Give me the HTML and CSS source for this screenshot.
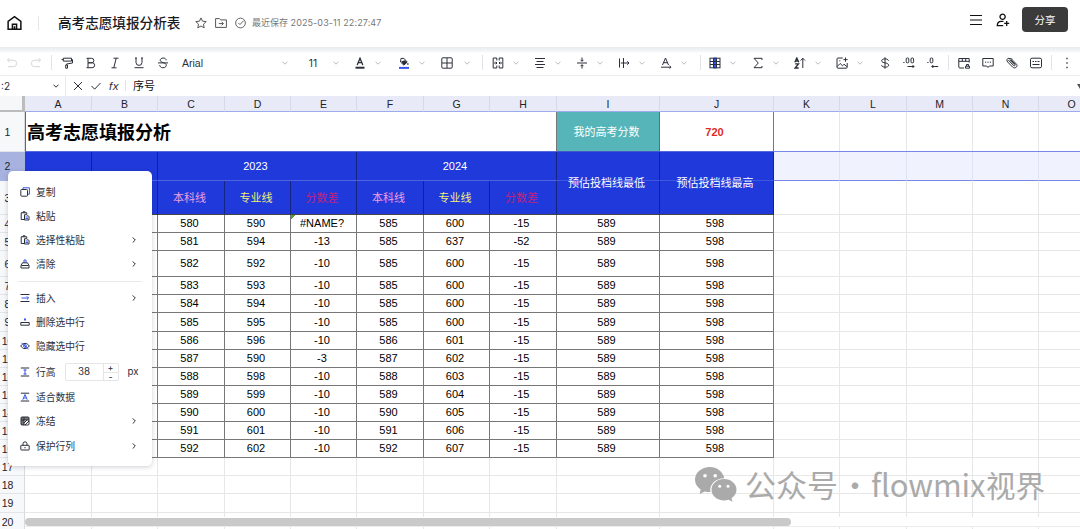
FILE: index.html
```html
<!DOCTYPE html>
<html lang="zh">
<head>
<meta charset="utf-8">
<title>高考志愿填报分析表</title>
<link rel="stylesheet" href="styles.css">
</head>
<body>
<svg class="defs" width="0" height="0">
  <symbol id="down" viewBox="0 0 6 4"><path d="M.5.7 3 3.2 5.5.7"/></symbol>
  <symbol id="right" viewBox="0 0 4 6"><path d="M.7.4 3.3 3 .7 5.6"/></symbol>
</svg>
<div class="app">
  <header class="top">
    <svg class="home" viewBox="0 0 16 16"><path d="M1.200 6.200 8 1.200l6.800 5v8.500H1.200z"/><path d="M5.800 14.500V9.300h4.400v5.200M8 11.500v3"/></svg>
    <span class="bar"></span>
    <h1 class="doc">高考志愿填报分析表</h1>
    <div class="meta">
      <svg viewBox="0 0 12 12"><path d="m6 .9 1.500 3.300 3.700.4-2.700 2.500.7 3.700L6 9l-3.200 1.800.7-3.700L.8 4.600l3.700-.4z"/></svg>
      <svg viewBox="0 0 12 12"><path d="M.6 10.400V1.600h3.800l1.200 1.300h5.800v7.500zM3.800 6.600h4.400M6.600 4.800l1.800 1.800-1.800 1.800"/></svg>
      <svg viewBox="0 0 12 12"><circle cx="6" cy="6" r="5.300"/><path d="m3.700 6 1.700 1.700 4-4.200"/></svg>
    </div>
    <span class="saved">最近保存 <span class="stamp">2025-03-11 22:27:47</span></span>
    <div class="actions">
      <svg class="lines" viewBox="0 0 12 12"><path d="M0 1.500h12M0 6h12M0 10.500h12"/></svg>
      <svg class="person" viewBox="0 0 14 14"><circle cx="6.600" cy="3.800" r="2.600"/><path d="M7.400 8.300H5.200C2.800 8.300 1.300 9.900 1.300 12.600h5.900M8.200 10.400h5M10.700 7.900v5"/></svg>
      <button class="share">分享</button>
    </div>
  </header>

  <div class="tools">
    <span class="ic off"><svg viewBox="0 0 12 12"><path d="M3.600 1 1.400 3.200l2.200 2.200M1.400 3.200h6a3.200 3.200 0 0 1 0 6.500H2"/></svg></span>
    <span class="ic off"><svg viewBox="0 0 12 12"><path d="m8.400 1 2.200 2.200-2.200 2.200M10.600 3.200h-6a3.200 3.200 0 0 0 0 6.500H10"/></svg></span>
    <span class="sep"></span>
    <span class="ic"><svg viewBox="0 0 12 12"><path d="M2.300 1.200h8.200v2.900H2.300zM2.300 2.600H.6M10.500 2.600h1v3.400L5.600 7v1M4.700 8h1.800v3.200H4.700z"/></svg></span>
    <span class="ic"><svg viewBox="0 0 12 12"><path d="M3 1.300h3.600a2.200 2.200 0 0 1 0 4.500H3zM3 5.800h4.200a2.400 2.400 0 0 1 0 4.900H3zM1.500 1.300H3M1.500 10.700H3"/></svg></span>
    <span class="ic"><svg viewBox="0 0 12 12"><path d="M4.500 1.200h5M2.500 10.800h5M7.200 1.200 4.800 10.800"/></svg></span>
    <span class="ic"><svg viewBox="0 0 12 12"><path d="M3 1v4.400a3 3 0 0 0 6 0V1M1.500 10.700h9M2 1h2M8 1h2"/></svg></span>
    <span class="ic"><svg viewBox="0 0 12 12"><path d="M9.300 3.300C9 .2 3.200.3 3.200 3.400 3.200 5.700 9.300 5.400 9.300 8.300c0 3.200-6.400 3.400-6.600-.2M1 5.900h10"/></svg></span>
    <span class="font">Arial</span><span class="arrow"><svg><use href="#down"/></svg></span>
    <span class="size">11</span><span class="arrow"><svg><use href="#down"/></svg></span>
    <span class="ic drop first"><svg viewBox="0 0 12 12"><path class="mid" d="M3.200 8 6 1.200 8.800 8M4 5.700h4"/><path class="thick" d="M1.500 10.700h9"/></svg><svg class="chev"><use href="#down"/></svg></span>
    <span class="ic drop"><svg viewBox="0 0 12 12"><path class="solid" d="M3.200 4.600 6.500 3.300l2.600 2-3.200 3z"/><path d="M3 1.400h3l3.200 3.700-3.300 3L2.500 5zM9.900 6v2"/><path class="thick blue" d="M1 10.900h10"/></svg><svg class="chev"><use href="#down"/></svg></span>
    <span class="ic drop"><svg viewBox="0 0 12 12"><rect x=".8" y=".8" width="10.400" height="10.400" rx="1"/><path d="M6 1v10M1 6h10"/></svg><svg class="chev"><use href="#down"/></svg></span>
    <span class="sep"></span>
    <span class="ic drop"><svg viewBox="0 0 12 12"><path d="M4.800 1H1.200v10h3.600V8.500M4.800 1v2.500M7.200 1h3.600v10H7.200V8.500M7.200 1v2.500M2 6h3M10 6H7M3.800 4.800 5 6 3.800 7.200M8.200 4.800 7 6l1.200 1.200"/></svg><svg class="chev"><use href="#down"/></svg></span>
    <span class="ic drop"><svg viewBox="0 0 12 12"><path d="M1 1.500h10M2.500 4.500h7M1 7.500h10M2.500 10.500h7"/></svg><svg class="chev"><use href="#down"/></svg></span>
    <span class="ic drop"><svg viewBox="0 0 12 12"><path d="M1 6h10M6 .5v3.700M6 11.500V7.800M4.500 2.800 6 4.300l1.500-1.500M4.500 9.200 6 7.700l1.500 1.500"/></svg><svg class="chev"><use href="#down"/></svg></span>
    <span class="ic drop"><svg viewBox="0 0 12 12"><path d="M1.500 1.500v9M5.500 1v10M2.800 6h8.200M9.300 4.300 11 6 9.300 7.700"/></svg><svg class="chev"><use href="#down"/></svg></span>
    <span class="ic drop"><svg viewBox="0 0 12 12"><path d="M2.500 8 5.500 1l3 7M3.600 5.700h3.900M1 10.200h10M9.600 8.800l1.400 1.400-1.400 1.400"/></svg><svg class="chev"><use href="#down"/></svg></span>
    <span class="sep late"></span>
    <span class="ic drop"><svg viewBox="0 0 12 12"><path class="blue fill" d="M4.500 1h3v10h-3z"/><rect x="1" y="1.200" width="10" height="9.600"/><path d="M1 4.500h10M1 7.500h10M4.500 1.500v9M7.500 1.500v9"/></svg><svg class="chev"><use href="#down"/></svg></span>
    <span class="ic drop shift"><svg viewBox="0 0 12 12"><path d="M10 3V1.300H2L6.300 6 2 10.700h8V9"/></svg><svg class="chev"><use href="#down"/></svg></span>
    <span class="ic drop"><svg viewBox="0 0 12 12"><path class="mid" d="m.8 5.200 2-4.200 2 4.200M1.500 4h2.600M1.100 6.900h3.400L1.100 11h3.600"/><path d="M8.800 11V1.300M6.600 3.500l2.200-2.200L11 3.500"/></svg><svg class="chev"><use href="#down"/></svg></span>
    <span class="ic drop"><svg viewBox="0 0 12 12"><path d="M6.700 1H2a1 1 0 0 0-1 1v8.200a1 1 0 0 0 1 1h8.200a1 1 0 0 0 1-1V6M1.200 9.500l3-3 2.300 2.300L8 7.200l2.800 2.400M9.500.5v4.200M7.400 2.600h4.200M3.300 3.800h1"/></svg><svg class="chev"><use href="#down"/></svg></span>
    <span class="ic cash"><svg viewBox="0 0 12 12"><path d="M9.500 3.700C9 1.300 2.700 1.200 2.700 3.800 2.700 6.500 9.600 5.300 9.600 8.200c0 2.700-6.600 2.600-7.100 0M6 .3v11.400"/></svg></span>
    <span class="ic"><svg viewBox="0 0 12 12"><path d="M.3 5.500h1.200"/><rect x="3.200" y="1" width="2.600" height="4.800" rx="1"/><rect x="8" y="1" width="2.600" height="4.800" rx="1"/><path d="M4.500 9.500H11M9.500 8l1.500 1.500L9.500 11"/></svg></span>
    <span class="ic"><svg viewBox="0 0 12 12"><path d="M.3 5.500h1.200"/><rect x="3.200" y="1" width="2.600" height="4.800" rx="1"/><path d="M4.800 9.500h6.400M6.300 8 4.800 9.500 6.300 11"/></svg></span>
    <span class="sep"></span>
    <span class="ic"><svg viewBox="0 0 12 12"><path d="M6 11H1.800a1 1 0 0 1-1-1V1.500h10.400V5.500M.8 4.300h10.400M4.300 1v3.300M7.700 1v3.300M7.500 11.200h4V9.200h-4zM8.500 9.200V7.500h2v1.700"/></svg></span>
    <span class="ic"><svg viewBox="0 0 12 12"><path d="M.8 1.500h10.400v7.500H7.300L6 10.500 4.700 9H.8zM3 5.200h1.200M5.400 5.200h1.200M7.800 5.200H9"/></svg></span>
    <span class="ic"><svg viewBox="0 0 12 12"><path d="M6.500 2.200 2.900 1.300C.8 1.300.3 3.800 1.700 5l5 5.200c2.200 1.800 5.300-.3 4-2.800L5.700 2.300M2.400 3.200l5.200 5.300c1.100.8 2.200-.3 1.400-1.400L4.500 2.600M3.500 2.700 8.300 7.600"/></svg></span>
    <span class="ic"><svg viewBox="0 0 12 12"><rect x=".5" y="1.200" width="11" height="9.600" rx="1.500"/><path d="M2.500 4.500H4M5 4.500h1.500M7.500 4.500h2M2.500 7.500h7"/></svg></span>
    <span class="sep"></span>
    <span class="ic"><svg viewBox="0 0 12 12"><path class="mid" d="M6 .8v1.500M6 5.200v1.500M6 9.700v1.500"/></svg></span>
  </div>

  <div class="formula">
    <span class="ref">:2</span><svg class="refdown"><use href="#down"/></svg>
    <span class="ops">
      <svg viewBox="0 0 10 10"><path d="m1 1 8 8M9 1 1 9"/></svg>
      <svg viewBox="0 0 10 10"><path d="m.6 5 3 3.200L9.500 2"/></svg>
      <i class="fx">fx</i>
    </span>
    <span class="val">序号</span>
    <svg class="more" viewBox="0 0 6 5"><path d="M0 0h6L3 5z"/></svg>
  </div>

  <main class="sheet">
    <div class="grid">
      <div class="corner"></div>
      <div class="ch">A</div><div class="ch">B</div><div class="ch">C</div><div class="ch">D</div><div class="ch">E</div><div class="ch">F</div><div class="ch">G</div><div class="ch">H</div><div class="ch">I</div><div class="ch">J</div><div class="ch">K</div><div class="ch">L</div><div class="ch">M</div><div class="ch">N</div><div class="ch">O</div>

      <div class="rh">1</div><div class="c title">高考志愿填报分析</div><div class="c teal">我的高考分数</div><div class="c score">720</div><p></p><p></p><p></p><p></p><p></p>

      <div class="rh on">2</div><div class="c h sel"></div><div class="c h sel"></div><div class="c h sel w3">2023</div><div class="c h sel w3">2024</div><div class="c h tall"><span>预估投档线最低</span></div><div class="c h tall"><span>预估投档线最高</span></div><p class="sel"></p><p class="sel"></p><p class="sel"></p><p class="sel"></p><p class="sel"></p>

      <div class="rh">3</div><div class="c h"></div><div class="c h"></div><div class="c h pink">本科线</div><div class="c h yellow">专业线</div><div class="c h red">分数差</div><div class="c h pink">本科线</div><div class="c h yellow">专业线</div><div class="c h red">分数差</div><p></p><p></p><p></p><p></p><p></p>

      <div class="rh">4</div><div class="c"></div><div class="c"></div><div class="c">580</div><div class="c">590</div><div class="c err">#NAME?</div><div class="c">585</div><div class="c">600</div><div class="c">-15</div><div class="c">589</div><div class="c">598</div><p></p><p></p><p></p><p></p><p></p>
      <div class="rh">5</div><div class="c"></div><div class="c"></div><div class="c">581</div><div class="c">594</div><div class="c">-13</div><div class="c">585</div><div class="c">637</div><div class="c">-52</div><div class="c">589</div><div class="c">598</div><p></p><p></p><p></p><p></p><p></p>
      <div class="rh">6</div><div class="c"></div><div class="c"></div><div class="c">582</div><div class="c">592</div><div class="c">-10</div><div class="c">585</div><div class="c">600</div><div class="c">-15</div><div class="c">589</div><div class="c">598</div><p></p><p></p><p></p><p></p><p></p>
      <div class="rh">7</div><div class="c"></div><div class="c"></div><div class="c">583</div><div class="c">593</div><div class="c">-10</div><div class="c">585</div><div class="c">600</div><div class="c">-15</div><div class="c">589</div><div class="c">598</div><p></p><p></p><p></p><p></p><p></p>
      <div class="rh">8</div><div class="c"></div><div class="c"></div><div class="c">584</div><div class="c">594</div><div class="c">-10</div><div class="c">585</div><div class="c">600</div><div class="c">-15</div><div class="c">589</div><div class="c">598</div><p></p><p></p><p></p><p></p><p></p>
      <div class="rh">9</div><div class="c"></div><div class="c"></div><div class="c">585</div><div class="c">595</div><div class="c">-10</div><div class="c">585</div><div class="c">600</div><div class="c">-15</div><div class="c">589</div><div class="c">598</div><p></p><p></p><p></p><p></p><p></p>
      <div class="rh">10</div><div class="c"></div><div class="c"></div><div class="c">586</div><div class="c">596</div><div class="c">-10</div><div class="c">586</div><div class="c">601</div><div class="c">-15</div><div class="c">589</div><div class="c">598</div><p></p><p></p><p></p><p></p><p></p>
      <div class="rh">11</div><div class="c"></div><div class="c"></div><div class="c">587</div><div class="c">590</div><div class="c">-3</div><div class="c">587</div><div class="c">602</div><div class="c">-15</div><div class="c">589</div><div class="c">598</div><p></p><p></p><p></p><p></p><p></p>
      <div class="rh">12</div><div class="c"></div><div class="c"></div><div class="c">588</div><div class="c">598</div><div class="c">-10</div><div class="c">588</div><div class="c">603</div><div class="c">-15</div><div class="c">589</div><div class="c">598</div><p></p><p></p><p></p><p></p><p></p>
      <div class="rh">13</div><div class="c"></div><div class="c"></div><div class="c">589</div><div class="c">599</div><div class="c">-10</div><div class="c">589</div><div class="c">604</div><div class="c">-15</div><div class="c">589</div><div class="c">598</div><p></p><p></p><p></p><p></p><p></p>
      <div class="rh">14</div><div class="c"></div><div class="c"></div><div class="c">590</div><div class="c">600</div><div class="c">-10</div><div class="c">590</div><div class="c">605</div><div class="c">-15</div><div class="c">589</div><div class="c">598</div><p></p><p></p><p></p><p></p><p></p>
      <div class="rh">15</div><div class="c"></div><div class="c"></div><div class="c">591</div><div class="c">601</div><div class="c">-10</div><div class="c">591</div><div class="c">606</div><div class="c">-15</div><div class="c">589</div><div class="c">598</div><p></p><p></p><p></p><p></p><p></p>
      <div class="rh">16</div><div class="c"></div><div class="c"></div><div class="c">592</div><div class="c">602</div><div class="c">-10</div><div class="c">592</div><div class="c">607</div><div class="c">-15</div><div class="c">589</div><div class="c">598</div><p></p><p></p><p></p><p></p><p></p>
      <div class="rh">17</div><p></p><p></p><p></p><p></p><p></p><p></p><p></p><p></p><p></p><p></p><p></p><p></p><p></p><p></p><p></p>
      <div class="rh">18</div><p></p><p></p><p></p><p></p><p></p><p></p><p></p><p></p><p></p><p></p><p></p><p></p><p></p><p></p><p></p>
      <div class="rh">19</div><p></p><p></p><p></p><p></p><p></p><p></p><p></p><p></p><p></p><p></p><p></p><p></p><p></p><p></p><p></p>
      <div class="rh">20</div><p></p><p></p><p></p><p></p><p></p><p></p><p></p><p></p><p></p><p></p><p></p><p></p><p></p><p></p><p></p>
    </div>
    <div class="selline"></div>
    <div class="track"><div class="thumb"></div></div>
  </main>

  <nav class="menu">
    <div class="mi"><svg viewBox="0 0 10 10"><path class="blue" d="M3 2.300V.8h6.400v6.400H7.700"/><rect x=".8" y="2.500" width="6.700" height="6.700" rx=".8"/></svg>复制</div>
    <div class="mi"><svg viewBox="0 0 10 10"><path d="M4 8.500H1.200V1.800h5.600V3M3 1.800V.8h2v1"/><path d="M4.500 3.700H7l2 2V9H4.500z"/><path class="blue" d="M5.500 6h2.500M5.500 7.600H8"/></svg>粘贴</div>
    <div class="mi"><svg viewBox="0 0 10 10"><path d="M4 8.500H1.200V1.800h5.600V3M3 1.800V.8h2v1"/><path d="M4.500 3.700H7l2 2V9H4.500z"/><path class="blue" d="M5.500 6h2.500M5.500 7.600H8"/></svg>选择性粘贴<svg class="go"><use href="#right"/></svg></div>
    <div class="mi"><svg viewBox="0 0 10 10"><path class="blue" d="M4 3.800V1h2v2.800"/><path d="M1 9V6.500l1.500-2.700h5L9 6.500V9zM1.300 6.500h7.400"/></svg>清除<svg class="go"><use href="#right"/></svg></div>
    <hr>
    <div class="mi"><svg viewBox="0 0 10 10"><path d="M.5 1.500h9M.5 8.500h9"/><path class="blue" d="M1.500 5h7M6.800 3.300 8.500 5 6.800 6.700"/></svg>插入<svg class="go"><use href="#right"/></svg></div>
    <div class="mi"><svg viewBox="0 0 10 10"><path d="M.8 5.500h8.400v2.700H.8z"/><path class="blue dot" d="M4 2.500h2"/></svg>删除选中行</div>
    <div class="mi"><svg viewBox="0 0 10 10"><path d="M.7 5C3 1.500 7 1.500 9.300 5 7 8.500 3 8.500.7 5z"/><circle class="blue" cx="5" cy="5" r="1.400"/><path class="blue" d="m1.500 2 7 6"/></svg>隐藏选中行</div>
    <div class="mi high"><svg viewBox="0 0 10 10"><path d="M.8 1h8.400M.8 9h8.400"/><path class="blue" d="M5 2.500v5M3.500 3h3M3.500 7h3"/></svg>行高
      <span class="num"><span class="n">38</span><span class="steps"><b>+</b><b>-</b></span></span><span class="px">px</span></div>
    <div class="mi"><svg viewBox="0 0 10 10"><path d="M.8 1.200h8.400M.8 9h8.400"/><path class="blue" d="M2.800 7.700 5 2.500l2.200 5.200M3.500 6h3"/></svg>适合数据</div>
    <div class="mi"><svg viewBox="0 0 10 10"><path class="shade" d="M1 1h8v3H4v5H1z"/><rect x="1" y="1" width="8" height="8" rx="1"/><path d="M1 4h8M4 1v8M4 7l3-3M5 9l4-4"/></svg>冻结<svg class="go"><use href="#right"/></svg></div>
    <div class="mi"><svg viewBox="0 0 10 10"><rect x=".8" y="4.300" width="8.400" height="4.700" rx=".5"/><path d="M3 4.300V2.800a2 2 0 0 1 4 0v1.500M5 6v1.300"/></svg>保护行列<svg class="go"><use href="#right"/></svg></div>
  </nav>

  <div class="mark">
    <svg viewBox="0 0 42 35"><path d="M15 0C6.500 0 0 5.600 0 12.800c0 4.200 2.200 7.400 5.700 9.800L4.500 27l5.300-2.600c2 .5 3.600.8 5.600.7C14 18 20 11.300 29.300 11.200 28 4.700 22 0 15 0z"/><path d="M29 12c-7 0-12.500 4.800-12.500 10.800S22 33.500 29 33.500c1.600 0 3-.3 4.500-.8l4.200 2.100-1.200-3.500c3-2 5-5 5-8.500C41.500 16.800 36 12 29 12z"/><g class="eyes"><circle cx="10" cy="8.800" r="1.800"/><circle cx="20.200" cy="8.800" r="1.800"/><circle cx="24.700" cy="19.300" r="1.500"/><circle cx="33" cy="19.300" r="1.500"/></g></svg>
    <span class="m1">公众号</span><span class="m2">·</span><span class="m3">flowmix</span><span class="m4">视界</span>
  </div>
</div>
</body>
</html>
```
FILE: styles.css
```css
* { box-sizing: border-box; }
body { margin: 0; background: #fff; color: #1f2329; font-family: "Liberation Sans", "Noto Sans CJK SC", sans-serif; }
svg { fill: none; stroke: currentColor; stroke-width: 1; flex: none; display: block; }
.defs { position: absolute; }
.app { position: relative; width: 1080px; height: 529px; overflow: hidden; display: flex; flex-direction: column; }
.blue { stroke: #3656f0; }
.fill { fill: #3656f0; }

.top { height: 47px; flex: none; display: flex; align-items: center; padding: 0 12px 2px 7px; }
.home { width: 15px; height: 16px; stroke-width: 1.600; color: #111; }
.bar { width: 1px; height: 14px; background: #e6e6e6; margin: 0 19px 0 16px; }
.doc { margin: 0; width: 137px; font-size: 13.600px; font-weight: 500; line-height: 20px; color: #1b1b1f; white-space: nowrap; font-family: "Noto Sans CJK SC", sans-serif; padding-bottom: 1px; }
.meta { display: flex; gap: 8px; color: #555; }
.meta svg { width: 12px; height: 12px; }
.meta svg:nth-child(3) { width: 11px; }
.saved { margin-left: 6px; font: 9px/14px Inter, "Noto Sans CJK SC", sans-serif; color: #777; white-space: nowrap; }
.stamp { font-size: 9px; letter-spacing: .110px; }
.actions { margin-left: auto; display: flex; align-items: center; padding-bottom: 6px; color: #111; }
.lines { width: 12px; height: 12px; stroke-width: 1.200; }
.person { width: 14px; height: 14px; margin: 0 12px 0 14px; stroke-width: 1.300; }
.share { width: 46px; height: 25px; border: 0; border-radius: 4px; background: #3b3b3b; color: #fff; font: 10.500px/24px "Noto Sans CJK SC", sans-serif; padding: 0; }

.tools { height: 29px; flex: none; display: flex; align-items: center; padding-top: 3px; border-bottom: 1px solid #ededef; background: linear-gradient(#e8eaec 0, #f1f2f4 3px, #f8f9fa 5px, #fff 6px); color: #2b2f3a; }
.ic { width: 24px; display: flex; align-items: center; justify-content: center; flex: none; }
.ic > svg { width: 12px; height: 12px; }
.off { color: #d5d6d9; }
.sep { width: 1px; height: 15px; background: #e2e3e6; margin: 0 3px; flex: none; }
.late { margin: 0 2px 0 4px; }
.font { font: 10.500px/14px "Liberation Sans", sans-serif; width: 94px; margin-left: 7px; }
.size { font: 10.200px/14px Inter, sans-serif; width: 26px; margin-left: 6px; margin-right: 1px; text-align: center; }
.arrow { width: 18px; display: flex; justify-content: center; color: #b9bbc0; }
.arrow svg, .ic > svg.chev { width: 6px; height: 4px; color: #b9bbc0; }
.drop { width: 36px; padding-left: 6px; justify-content: flex-start; margin-right: 6px; }
.drop .chev { margin-left: 9px; }
.first { margin-left: 3px; }
.first, .first + .drop { width: 37px; margin-right: 7px; }
.first + .drop { margin-right: 6px; }
.first + .drop + .drop { width: 37px; margin-right: 7px; }
.first + .drop + .drop .chev { margin-left: 11px; }
.shift { margin-left: 1px; }
.cash { margin-left: 1px; }
.mid { stroke-width: 1.300; }
.thick { stroke-width: 2; }
.dot { stroke-width: 2; }
.solid { fill: currentColor; stroke: none; }

.formula { height: 20px; flex: none; display: flex; align-items: center; font-size: 11px; color: #2b2f3a; }
.ref { width: 53px; font: 10px/14px Inter, sans-serif; padding-left: 1px; }
.refdown { width: 6px; height: 4px; }
.ops { display: flex; align-items: center; gap: 8px; height: 20px; margin-left: 6px; padding-left: 7px; border-left: 1px solid #e9e9ec; }
.ops svg { width: 10px; height: 10px; }
.fx { font: italic 11.500px/14px "Liberation Sans", sans-serif; width: 11px; letter-spacing: .500px; }
.val { margin-left: 5px; padding-left: 7px; border-left: 1px solid #e3e3e6; line-height: 11px; font-family: "Noto Sans CJK SC", sans-serif; margin-bottom: 1px; color: #111; }
.more { width: 6px; height: 5px; margin: 0 -3px 0 auto; fill: #555; stroke: none; }

.sheet { position: relative; height: 433px; overflow: hidden; }
.grid { display: grid; width: 1105px; grid-template-columns: 25px 67px 66px 67px 66px 66px 67px 66px 67px 103px 114px 66px 67px 66px 66px 66px; grid-template-rows: 16px 40px 29px 34px 18px 18px 26px 18px 18px 19px 18px 18px 18px 18px 18px 18px 18px 18px 18px 19px 18px; font-size: 11px; }
.corner { background: #f6f7f9; border: solid #bcbcbc; border-width: 0 3px 2px 0; }
.ch { background: #e8eaf7; border-right: 1px solid #d6d9e8; border-bottom: 1px solid #9dabed; text-align: center; font: 10.500px/17px "Liberation Sans", sans-serif; }
.rh { background: #f7f8fa; border-right: 1px solid #d8dade; border-bottom: 1px solid #e2e4e8; display: flex; align-items: center; padding-right: 9px; justify-content: center; font: 10.500px/12px "Liberation Sans", sans-serif; color: #1f2329; }
.on { background: #a7b2e1; border-color: #a7b2e1; }
.grid p { margin: 0; border-right: 1px solid #e7e7e7; border-bottom: 1px solid #e7e7e7; }
.c { display: flex; align-items: center; justify-content: center; border-right: 1px solid #777; border-bottom: 1px solid #777; color: #000; padding: 0 3px 1px 0; line-height: 12px; white-space: nowrap; }
.title { grid-column: span 8; justify-content: flex-start; padding: 0 0 1px 1px; font: bold 18px/24px "Noto Sans CJK SC", sans-serif; border-left: 1px solid #666; border-bottom-color: #5469dd; }
.teal { background: #55b5b8; color: #fff; border-color: #36807f #36807f #4458ce; padding-bottom: 0; }
.score { color: #e02b22; font-weight: bold; border-bottom-color: #5469dd; padding: 0 4px 0 0; }
.h { background: #1f39db; color: #fff; border-color: #142482; border-bottom-color: #444; }
.sel.h { border-bottom-color: #4058e0; padding-bottom: 0; }
.grid p.sel { background: #f0f3fd; border-color: #dfe4f5; border-bottom-color: #7689e8; box-shadow: 0 -1px #7689e8; }
.w3 { grid-column: span 3; }
.tall { grid-row: span 2; padding: 0 3px 0 0; }
.pink { color: #ef9fe0; }
.yellow { color: #f3ef77; }
.red { color: #c4227a; }
.pink, .yellow, .red { padding-bottom: 0; }
.err { background: linear-gradient(135deg, #48a52a 3px, transparent 3.100px); }
.selline { position: absolute; left: 25px; top: 84px; width: 749px; height: 1px; background: rgba(90, 112, 230, .55); }
.track { position: absolute; left: 25px; right: 0; bottom: 2px; height: 10px; padding-top: 1px; background: #fff; border-bottom: 1px solid #ececec; }
.thumb { width: 766px; height: 8px; border-radius: 4px; background: #c9c9c9; }

.menu { position: absolute; left: 8px; top: 171px; width: 144px; height: 295px; padding: 8.800px 10px 0; background: #fff; border-radius: 5px; box-shadow: 0 1px 5px rgba(30, 35, 60, .22); color: #2b2f3a; }
.mi { height: 24.200px; display: flex; align-items: center; font: 9.750px/14px "Noto Sans CJK SC", sans-serif; padding: 0 6px 0 2px; }
.mi > svg:first-child { width: 10px; height: 10px; margin-right: 6px; }
.mi .go { width: 4px; height: 6px; margin-left: auto; }
.menu hr { height: 1px; border: 0; margin: 4px 0; background: #e9e9ec; }
.high { height: 27px; padding-right: 0; }
.num { display: flex; width: 54px; height: 18px; margin-left: 9px; border: 1px solid #e5e5e9; border-radius: 2px; font: 9.750px/16px Inter, sans-serif; }
.n { flex: 1; text-align: center; }
.steps { width: 15px; border-left: 1px solid #e5e5e9; display: grid; grid-template-rows: 8px 8px; text-align: center; }
.steps b { font: 9px/8px Inter, sans-serif; }
.steps b + b { border-top: 1px solid #e5e5e9; }
.px { margin-left: 9px; font: 9.750px/14px Inter, sans-serif; }
.shade { fill: #777; stroke: none; }

.mark { position: absolute; left: 695px; top: 467px; height: 34px; display: flex; align-items: center; color: #aaa; font: 31px/34px "Noto Sans CJK SC", sans-serif; white-space: nowrap; }
.mark svg { width: 42px; height: 35px; fill: #aaa; stroke: none; margin-right: 8px; }
.mark .eyes { fill: #fff; }
.m1 { width: 94px; }
.m2 { width: 32px; text-align: center; }
.m3 { width: 115px; letter-spacing: -.100px; }
.m4 { font-size: 29.500px; }
.m1, .m2, .m3, .m4 { padding-bottom: 1px; }
```
